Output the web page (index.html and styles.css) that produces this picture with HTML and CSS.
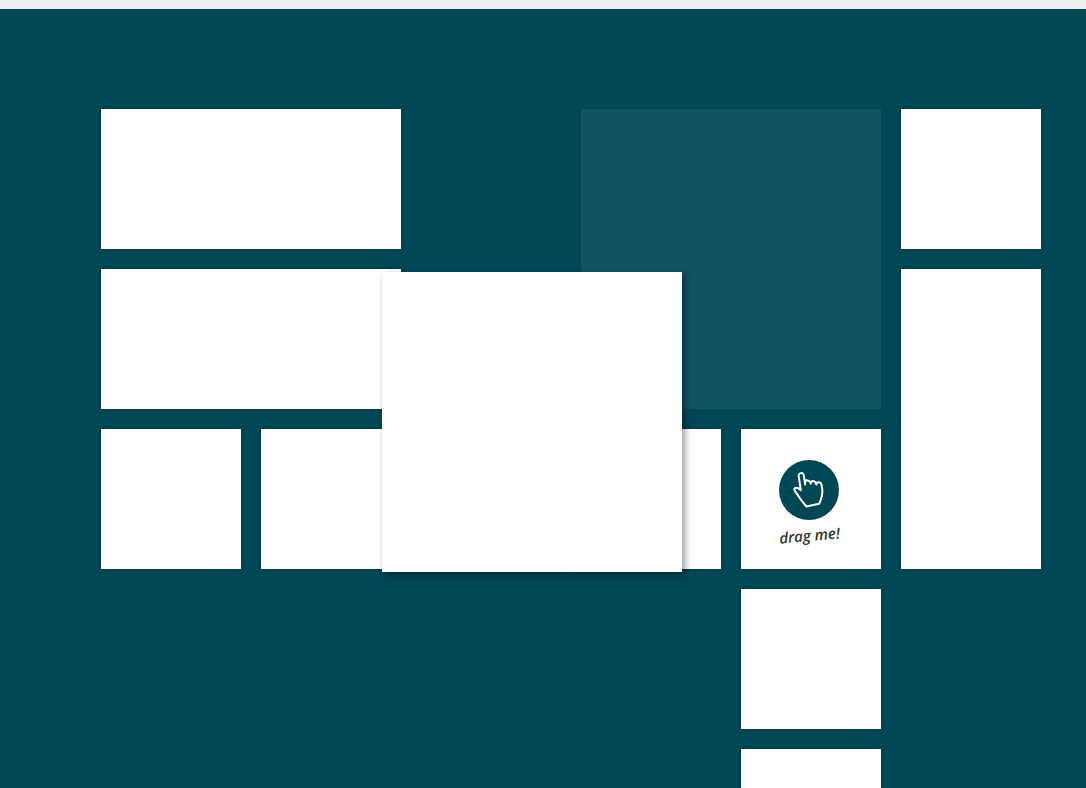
FILE: index.html
```
<!DOCTYPE html>
<html lang="en">
<head>
    <title>Drag Grid</title>
    <meta charset="utf-8">
    <meta name="viewport" content="width=device-width, initial-scale=1">
    <link rel="stylesheet" href="styles.css">
</head>

<body>
    <section class="demo">
        <div class="grid">
            <div class="tile tile-a"></div>
            <div class="placeholder"></div>
            <div class="tile tile-b"></div>
            <div class="tile tile-c"></div>
            <div class="tile tile-d"></div>
            <div class="tile tile-e"></div>
            <div class="tile tile-f"></div>
            <div class="tile tile-g"></div>
            <div class="tile try">
                <svg class="hand" viewBox="0 0 60 60" width="60" height="60" aria-hidden="true">
                    <circle cx="30" cy="30" r="30"/>
                    <path d="M26.2 24.5L24.8 15.6C24.2 12 19.2 12.4 19.7 16.2L21.8 30.2L19.4 28.4C16.8 26.6 14.2 28.6 16 31.2L19.2 35.6L22.2 40.2L27.4 46.5L40.2 43.8C42.6 38.8 43.9 34 43.2 28.4L42.4 24.6C41.6 21.4 37.4 21.4 37.3 24.6M37.3 24.6C36.4 20 31.6 20 31.8 23.6M31.8 23.6C31 19.6 26.4 19.4 26 22.6"/>
                </svg>
                <span class="try-text">drag me!</span>
            </div>
            <div class="tile tile-h"></div>
            <div class="tile tile-i"></div>
            <div class="tile dragging"></div>
        </div>
    </section>
</body>
</html>
```

FILE: styles.css
```
body {
    margin: 0;
    background-color: #eeeeee;
    font-family: "Open Sans", sans-serif;
}

.demo {
    margin-top: 9px;
    padding: 100px 45px 100px 101px;
    background-color: #004756;
}

.grid {
    position: relative;
    display: grid;
    grid-template-columns: repeat(6, 140px);
    grid-auto-rows: 140px;
    gap: 20px;
    grid-template-areas:
        "a a . p p b"
        "c c . p p d"
        "e f f g t d"
        ". . . . h ."
        ". . . . i .";
}

.tile {
    background-color: #ffffff;
    box-shadow: 0 0 5px rgba(0,0,0,.3);
}

.tile-a { grid-area: a; }
.tile-b { grid-area: b; }
.tile-c { grid-area: c; }
.tile-d { grid-area: d; }
.tile-e { grid-area: e; }
.tile-f { grid-area: f; }
.tile-g { grid-area: g; }
.tile-h { grid-area: h; }
.tile-i { grid-area: i; }

.placeholder {
    grid-area: p;
    background-color: rgba(255,255,255,.065);
}

/* tile that is being moved around, lies over the others */
.dragging {
    position: absolute;
    top: 163px;
    left: 281px;
    width: 300px;
    height: 300px;
    box-shadow: 3px 3px 7px rgba(0,0,0,.4);
}

.try {
    grid-area: t;
    display: flex;
    flex-direction: column;
    align-items: center;
    justify-content: center;
    padding: 12px 4px 0 0;
}

.hand circle {
    fill: #004756;
}

.hand path {
    fill: none;
    stroke: #ffffff;
    stroke-width: 2;
    stroke-linecap: round;
    stroke-linejoin: round;
}

.try-text {
    color: #333333;
    font-size: 15px;
    font-style: italic;
    font-weight: 600;
    line-height: 30px;
    transform: rotate(-5deg);
}
```
